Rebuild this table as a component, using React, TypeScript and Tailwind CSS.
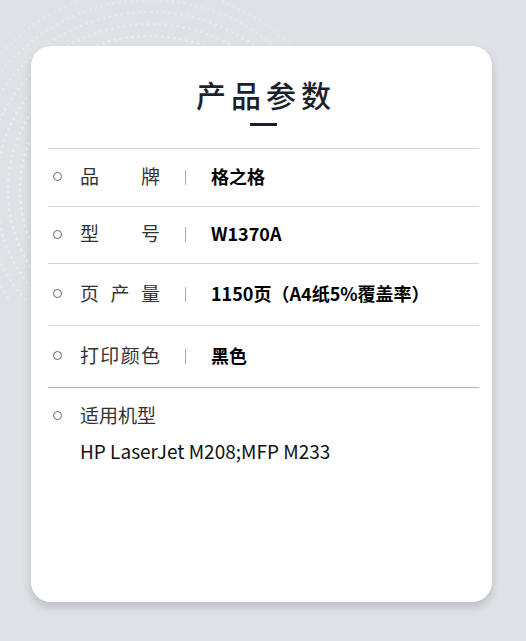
import React from 'react';

const cjk = '"Noto Sans CJK SC", "Noto Sans", sans-serif';

const rows = [
  { label: ['品', '牌'], value: '格之格', h: 'h-[58px]' },
  { label: ['型', '号'], value: 'W1370A', h: 'h-[57px]' },
  { label: ['页', '产', '量'], value: '1150页（A4纸5%覆盖率）', h: 'h-[62px]' },
  { label: ['打', '印', '颜', '色'], value: '黑色', h: 'h-[62px]' },
];

const Dots: React.FC = () => (
  <svg className="absolute left-0 top-0" width="300" height="300" viewBox="0 0 300 300">
    {[118, 130, 142, 154, 166, 178, 190, 202].map((r, i) => (
      <circle
        key={r}
        cx="150"
        cy="190"
        r={r}
        fill="none"
        stroke="#ffffff"
        strokeOpacity={0.45 - i * 0.04}
        strokeWidth="3"
        strokeLinecap="round"
        strokeDasharray="0 6"
      />
    ))}
  </svg>
);

const App: React.FC = () => {
  return (
    <div className="relative min-h-[641px] overflow-hidden bg-[#dee2e6] px-[31px] pt-[46px]" style={{ fontFamily: cjk }}>
      <Dots />
      <div className="relative h-[556px] w-[461px] rounded-[20px] bg-white pl-[17px] pr-[13px] shadow-[0_5px_10px_rgba(0,0,0,0.16)]">
        <div className="pt-[28px] text-center">
          <h1 className="pl-[5px] text-[30px] font-medium leading-[40px] tracking-[5px] text-[#1c1f2e]">产品参数</h1>
          <div className="mx-auto mt-[9px] h-[2.5px] w-[27px] bg-[#1c1f2e]"></div>
        </div>

        <div className="mt-[22px] border-t border-[#d4d4d4]">
          {rows.map((row, i) => (
            <div
              key={i}
              className={`flex items-center border-b pb-[3px] ${row.h} ${i === rows.length - 1 ? 'border-[#b4b4b4]' : 'border-[#d4d4d4]'}`}
            >
              <span className="ml-[5px] mt-[2px] h-[9px] w-[9px] rounded-full border border-[#666]"></span>
              <span className="ml-[18px] flex w-[80px] justify-between text-[19px] leading-6 text-[#333]">
                {row.label.map((c) => (
                  <span key={c}>{c}</span>
                ))}
              </span>
              <span className="ml-[25px] mt-[3px] h-[15px] w-px bg-[#aaa]"></span>
              <span className="ml-[25px] text-[18px] font-bold leading-6 text-black">{row.value}</span>
            </div>
          ))}
        </div>

        <div className="pt-[15px]">
          <div className="flex items-center">
            <span className="ml-[5px] mt-[2px] h-[9px] w-[9px] rounded-full border border-[#666]"></span>
            <span className="ml-[18px] text-[19px] leading-6 text-[#333]">适用机型</span>
          </div>
          <div className="ml-[32px] mt-[12px] text-[19px] leading-6 text-[#111]">HP LaserJet M208;MFP M233</div>
        </div>
      </div>
    </div>
  );
};

export default App;
